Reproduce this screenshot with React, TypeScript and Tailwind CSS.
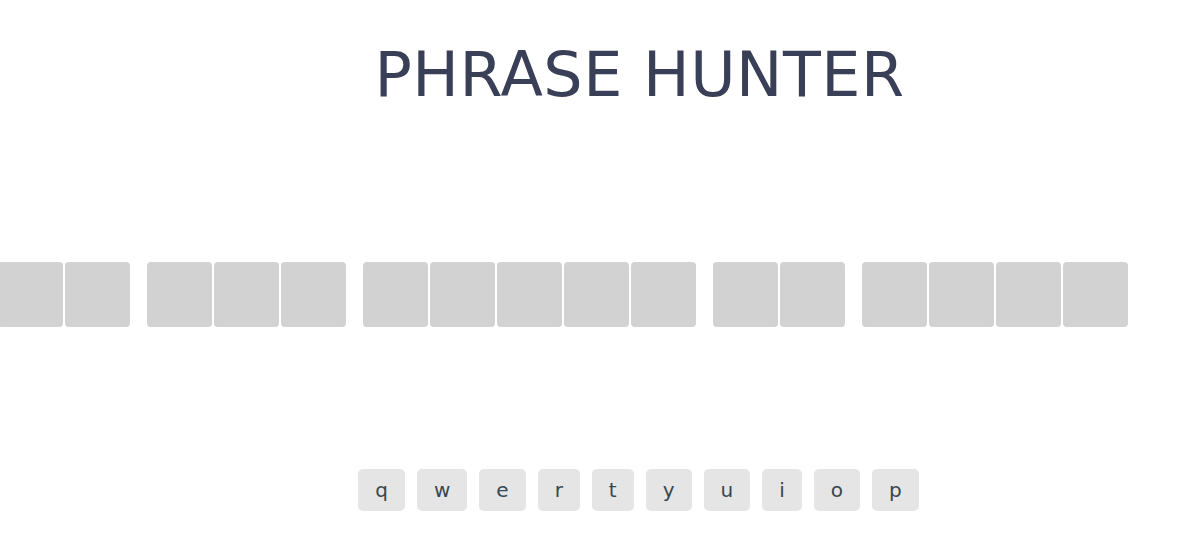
import React from "react";

const words = [2, 3, 5, 2, 4];
const keys = ["q", "w", "e", "r", "t", "y", "u", "i", "o", "p"];

export default function App() {
  return (
    <div
      className="w-[1200px] h-[550px] bg-white overflow-hidden"
      style={{ fontFamily: '"DejaVu Sans", "Liberation Sans", sans-serif' }}
    >
      <div className="flex justify-center pl-[79px] pt-[44px]">
        <h1 className="text-[62px] leading-none font-normal text-[#3a3f58] tracking-[0.5px]">
          PHRASE HUNTER
        </h1>
      </div>
      <div className="flex mt-[156px] ml-[-2px] gap-[17px]">
        {words.map((n, wi) => (
          <div key={wi} className="flex gap-[2px]">
            {Array.from({ length: n }).map((_, i) => (
              <div
                key={i}
                className="w-[65px] h-[65px] rounded-[4px] bg-[#d2d2d2] shrink-0"
              />
            ))}
          </div>
        ))}
      </div>
      <div className="flex justify-center pl-[77px] mt-[142px] gap-[12px]">
        {keys.map((k) => (
          <div
            key={k}
            className="h-[42px] px-[17px] flex items-center justify-center rounded-[5px] bg-[#e5e5e5] text-[20px] text-[#37474f]"
          >
            {k}
          </div>
        ))}
      </div>
    </div>
  );
}
